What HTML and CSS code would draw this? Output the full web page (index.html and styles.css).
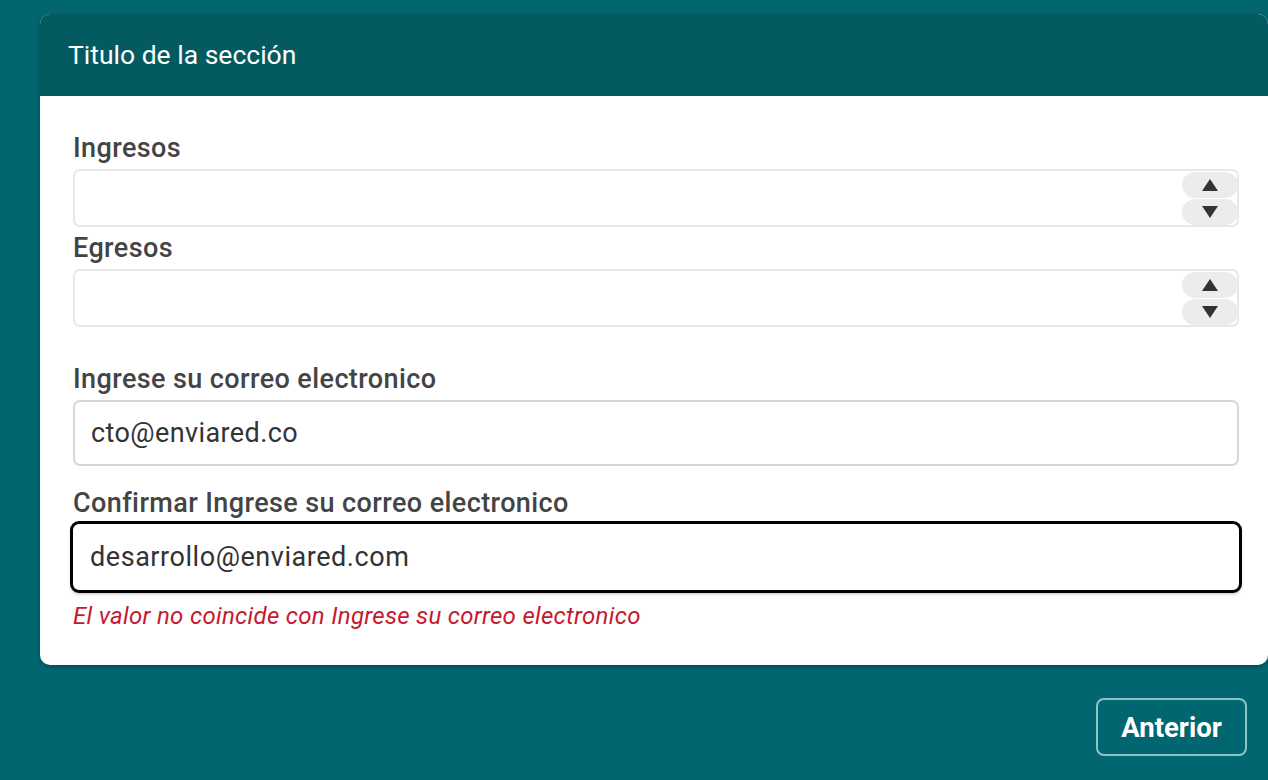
FILE: index.html
```html
<!DOCTYPE html>
<html lang="es">
<head>
<meta charset="utf-8">
<title>Formulario</title>
<link rel="stylesheet" href="styles.css">
</head>
<body>
<div class="page">
  <section class="card">
    <header class="card-header">Titulo de la sección</header>
    <div class="card-body">
      <div class="field field-first">
        <label class="label">Ingresos</label>
        <div class="input input-number">
          <span class="value"></span>
          <div class="spinner">
            <span class="spin spin-up"><svg width="16" height="12" viewBox="0 0 16 12"><polygon points="8,0 16,12 0,12" fill="#333"/></svg></span>
            <span class="spin spin-down"><svg width="16" height="12" viewBox="0 0 16 12"><polygon points="0,0 16,0 8,12" fill="#333"/></svg></span>
          </div>
        </div>
      </div>
      <div class="field field-second">
        <label class="label">Egresos</label>
        <div class="input input-number">
          <span class="value"></span>
          <div class="spinner">
            <span class="spin spin-up"><svg width="16" height="12" viewBox="0 0 16 12"><polygon points="8,0 16,12 0,12" fill="#333"/></svg></span>
            <span class="spin spin-down"><svg width="16" height="12" viewBox="0 0 16 12"><polygon points="0,0 16,0 8,12" fill="#333"/></svg></span>
          </div>
        </div>
      </div>
      <div class="field field-email">
        <label class="label">Ingrese su correo electronico</label>
        <div class="input input-text"><span class="value">cto@enviared.co</span></div>
      </div>
      <div class="field field-confirm">
        <label class="label">Confirmar Ingrese su correo electronico</label>
        <div class="input input-text input-focus"><span class="value">desarrollo@enviared.com</span></div>
        <p class="error">El valor no coincide con Ingrese su correo electronico</p>
      </div>
    </div>
  </section>
  <div class="actions">
    <button class="btn">Anterior</button>
  </div>
</div>
</body>
</html>
```

FILE: styles.css
```css
html, body {
  margin: 0;
  padding: 0;
}
body {
  background: #026670;
  font-family: Roboto, "Noto Sans", "Liberation Sans", sans-serif;
  width: 1268px;
  height: 780px;
  overflow: hidden;
}
.page {
  padding: 14px 0 0 40px;
}
.card {
  width: 1228px;
  background: #fff;
  border-radius: 10px;
  overflow: hidden;
  box-shadow: 0 2px 4px rgba(0, 0, 0, 0.25);
}
.card-header {
  height: 82px;
  background: #045a61;
  color: #fff;
  font-size: 26.5px;
  font-weight: 400;
  display: flex;
  align-items: center;
  padding-left: 28px;
  padding-bottom: 2px;
  box-sizing: border-box;
}
.card-body {
  padding: 37px 29px 36px 33px;
}
.field {
  display: flex;
  flex-direction: column;
}
.label {
  font-size: 27px;
  letter-spacing: 0.4px;
  line-height: 30px;
  font-weight: 500;
  color: #444;
  margin-bottom: 6px;
}
.field-second {
  margin-top: 6px;
}
.field-email {
  margin-top: 37px;
}
.field-confirm {
  margin-top: 22px;
}
.input {
  box-sizing: border-box;
  border: 2px solid #e8e8e8;
  border-radius: 7px;
  display: flex;
  align-items: center;
  background: #fff;
}
.input-number {
  height: 58px;
  padding: 0 0 0 16px;
  justify-content: space-between;
}
.input-text {
  height: 66px;
  border-color: #d6d6d6;
  padding: 0 16px;
  font-size: 27px;
  letter-spacing: 0.4px;
  color: #333;
}
.input-focus {
  height: 72px;
  border: 3px solid #000;
  border-radius: 9px;
  margin: -3px -3px 0 -3px;
  padding: 0 17px;
  letter-spacing: 0.55px;
  box-shadow: 0 2px 2px rgba(0, 0, 0, 0.15);
}
.spinner {
  display: flex;
  flex-direction: column;
  gap: 1px;
  margin-right: -1px;
  align-self: stretch;
  justify-content: center;
}
.spin {
  width: 56px;
  height: 26px;
  background: #ececec;
  border-radius: 13px;
  display: flex;
  align-items: center;
  justify-content: center;
}
.spin svg {
  display: block;
}
.error {
  margin: 10px 0 0 0;
  font-size: 24px;
  letter-spacing: 0.3px;
  line-height: 26px;
  font-style: italic;
  color: #c5192d;
}
.actions {
  display: flex;
  justify-content: flex-end;
  padding-right: 21px;
  margin-top: 33px;
}
.btn {
  width: 151px;
  height: 58px;
  background: transparent;
  border: 2px solid #8ec3c6;
  border-radius: 8px;
  color: #fff;
  font-family: Roboto, "Noto Sans", "Liberation Sans", sans-serif;
  font-size: 27.5px;
  font-weight: 700;
  padding: 0;
}
```
